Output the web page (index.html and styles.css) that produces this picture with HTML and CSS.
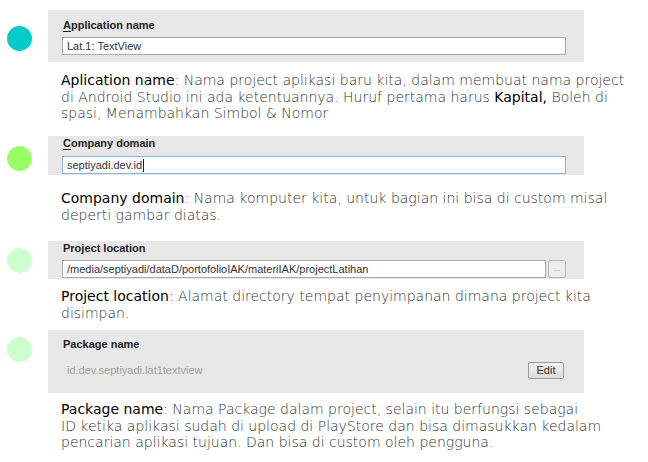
FILE: index.html
```html
<!DOCTYPE html>
<html>
<head>
<meta charset="utf-8">
<link rel="stylesheet" href="styles.css">
</head>
<body>
<div class="page">
  <section class="item item-1">
    <div class="dot dot-teal"></div>
    <div class="content">
      <div class="panel panel-1">
        <div class="label"><u>A</u>pplication name</div>
        <div class="field"><span class="value">Lat.1: TextView</span></div>
      </div>
      <p class="desc"><span class="key">Aplication name</span>: Nama project aplikasi baru kita, dalam membuat nama project<br>di Android Studio ini ada ketentuannya. Huruf pertama harus <span class="key">Kapital,</span> Boleh di<br>spasi, Menambahkan Simbol &amp; Nomor</p>
    </div>
  </section>

  <section class="item item-2">
    <div class="dot dot-green"></div>
    <div class="content">
      <div class="panel panel-2">
        <div class="label"><u>C</u>ompany domain</div>
        <div class="field focused"><span class="value">septiyadi.dev.id</span><span class="caret"></span></div>
      </div>
      <p class="desc"><span class="key">Company domain</span>: Nama komputer kita, untuk bagian ini bisa di custom misal<br>deperti gambar diatas.</p>
    </div>
  </section>

  <section class="item item-3">
    <div class="dot dot-pale"></div>
    <div class="content">
      <div class="panel panel-3">
        <div class="label">Project location</div>
        <div class="row">
          <div class="field grow"><span class="value">/media/septiyadi/dataD/portofolioIAK/materiIAK/projectLatihan</span></div>
          <div class="browse">...</div>
        </div>
      </div>
      <p class="desc"><span class="key">Project location</span>: Alamat directory tempat penyimpanan dimana project kita<br>disimpan.</p>
    </div>
  </section>

  <section class="item item-4">
    <div class="dot dot-pale"></div>
    <div class="content">
      <div class="panel panel-4">
        <div class="label">Package name</div>
        <div class="row pkg-row">
          <span class="pkg">id.dev.septiyadi.lat1textview</span>
          <div class="edit">Edit</div>
        </div>
      </div>
      <p class="desc"><span class="key">Package name</span>: Nama Package dalam project, selain itu berfungsi sebagai<br>ID ketika aplikasi sudah di upload di PlayStore dan bisa dimasukkan kedalam<br>pencarian aplikasi tujuan. Dan bisa di custom oleh pengguna.</p>
    </div>
  </section>
</div>
</body>
</html>
```

FILE: styles.css
```css
html, body {
  margin: 0;
  padding: 0;
  background: #ffffff;
}

.page {
  width: 648px;
  height: 462px;
  overflow: hidden;
  display: flex;
  flex-direction: column;
  padding-top: 10px;
  box-sizing: border-box;
}

.item {
  display: grid;
  grid-template-columns: 48px 536px;
}

.dot {
  width: 25px;
  height: 25px;
  border-radius: 50%;
  margin-left: 7px;
}
.dot-teal { background: #00cccc; margin-top: 16px; }
.dot-green { background: #99ff66; margin-top: 10px; }
.dot-pale { background: #ccffcc; margin-top: 7px; }

.content {
  display: flex;
  flex-direction: column;
}

.panel {
  background: #e8e8e8;
  padding: 0 18px 0 14px;
  font-family: "Liberation Sans", Arial, sans-serif;
  font-size: 11px;
  color: #333;
}

.label {
  font-weight: bold;
  color: #222;
  line-height: 14px;
  padding-left: 1px;
}
.label u { text-decoration-thickness: 1px; text-underline-offset: 2px; }

.field {
  height: 18px;
  box-sizing: border-box;
  background: #fff;
  border: 1px solid #a9a9a9;
  display: flex;
  align-items: center;
  padding-left: 4px;
  color: #333;
}
.field.focused { border-color: #8cb2e0; }
.caret {
  width: 1px;
  height: 13px;
  background: #222;
  margin-left: 1px;
}

.row {
  display: flex;
  gap: 2px;
  align-items: center;
}
.grow { flex: 1; }

.browse {
  width: 18px;
  height: 18px;
  box-sizing: border-box;
  border: 1px solid #b5b5b5;
  border-radius: 2px;
  background: #eeeeee;
  color: #999;
  font-size: 8px;
  display: flex;
  align-items: center;
  justify-content: center;
  line-height: 1;
}

.panel-1 { padding-top: 8px; padding-bottom: 7px; }
.panel-1 .label { margin-bottom: 5px; }
.panel-2 { padding-top: 0; padding-bottom: 1px; }
.panel-2 .label { margin-bottom: 6px; }
.panel-3 { padding-top: 0; padding-bottom: 1px; }
.panel-3 .label { margin-bottom: 5px; }
.panel-4 { padding-top: 7px; padding-bottom: 14px; }
.panel-4 .label { margin-bottom: 10px; }

.pkg-row { justify-content: space-between; height: 18px; }
.pkg { color: #a0a0a0; padding-left: 5px; }
.edit {
  width: 36px;
  height: 17px;
  margin-right: 2px;
  box-sizing: border-box;
  border: 1px solid #9a9a9a;
  border-radius: 2px;
  background: linear-gradient(#f2f2f2, #dcdcdc);
  color: #333;
  display: flex;
  align-items: center;
  justify-content: center;
}

.desc {
  margin: 0;
  padding-left: 13px;
  font-family: "DejaVu Sans", "Liberation Sans", sans-serif;
  font-size: 14px;
  line-height: 16.5px;
  font-weight: 200;
  color: #333333;
  white-space: nowrap;
}
.key { color: #000; font-weight: 400; }

.item-1 .desc { margin-top: 10px; height: 64px; }
.item-2 .desc { margin-top: 15px; height: 51px; }
.item-3 .desc { margin-top: 9px; height: 42px; }
.item-4 .desc { margin-top: 8px; }
```
